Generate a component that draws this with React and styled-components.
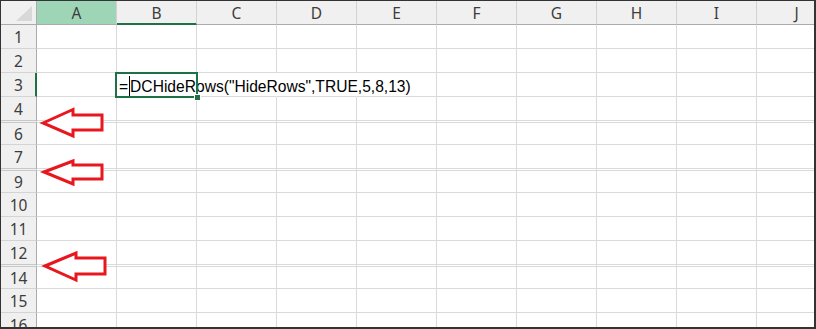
import React from 'react';
import styled, { createGlobalStyle } from 'styled-components';

const GREEN = '#1e7145';
const GRID = '#dadada';
const HEAD_LINE = '#ababab';

const GlobalStyle = createGlobalStyle`
  html, body {
    margin: 0;
    padding: 0;
    background: #fff;
  }
  body {
    overflow: hidden;
  }
`;

const COLS = ['A', 'B', 'C', 'D', 'E', 'F', 'G', 'H', 'I', 'J'];

// rows 5, 8 and 13 are hidden: the row above gets the double line
const ROWS = [
  { n: 1, h: 24 },
  { n: 2, h: 24 },
  { n: 3, h: 24, formula: true },
  { n: 4, h: 26, hiddenAfter: true },
  { n: 6, h: 22 },
  { n: 7, h: 26, hiddenAfter: true },
  { n: 9, h: 22 },
  { n: 10, h: 24 },
  { n: 11, h: 24 },
  { n: 12, h: 26, hiddenAfter: true },
  { n: 14, h: 22 },
  { n: 15, h: 24 },
  { n: 16, h: 24 },
];

const ARROWS = [
  { x: 40, y: 107, tip: 15, back: 32, top: 1.5, bottom: 28, shaftTop: 7, shaftBottom: 22, right: 61 },
  { x: 41, y: 158, tip: 13, back: 31, top: 2, bottom: 25, shaftTop: 6, shaftBottom: 20, right: 60 },
  { x: 42, y: 250, tip: 15, back: 33, top: 2, bottom: 29, shaftTop: 7, shaftBottom: 23, right: 62 },
];

const Frame = styled.div`
  position: relative;
  width: 816px;
  height: 329px;
  box-sizing: border-box;
  border: 1px solid #333;
  border-right-width: 2px;
  border-bottom-width: 2px;
  overflow: hidden;
  background: #fff;
  font-family: 'Noto Sans', 'Liberation Sans', sans-serif;
`;

const Row = styled.div`
  display: flex;
  height: ${(p) => p.$h}px;
`;

const Corner = styled.div`
  position: relative;
  flex: none;
  width: 36px;
  box-sizing: border-box;
  background: #f0f0f0;
  border-right: 1px solid ${HEAD_LINE};
  border-bottom: 1px solid ${HEAD_LINE};

  &::after {
    content: '';
    position: absolute;
    left: 15px;
    top: 5px;
    width: 16px;
    height: 15px;
    background: #d8d8d8;
    clip-path: polygon(0 100%, 100% 100%, 100% 0);
  }
`;

const ColHeader = styled.div`
  flex: none;
  width: 80px;
  box-sizing: border-box;
  display: flex;
  align-items: center;
  justify-content: center;
  background: ${(p) => (p.$selected ? '#9fd5b7' : '#f0f0f0')};
  border-right: 1px solid #d2d2d2;
  border-bottom: ${(p) => (p.$active ? `2px solid ${GREEN}` : `1px solid ${HEAD_LINE}`)};
  color: #3c3c3c;
  font-size: 15.5px;
  padding-top: ${(p) => (p.$active ? '1px' : '0')};
`;

const RowHeader = styled.div`
  flex: none;
  width: 36px;
  box-sizing: border-box;
  display: flex;
  align-items: center;
  justify-content: center;
  background: #f0f0f0;
  border-right: ${(p) => (p.$active ? `2px solid ${GREEN}` : `1px solid ${HEAD_LINE}`)};
  border-bottom: ${(p) => (p.$double ? '3px double #c8c8c8' : '1px solid #d4d4d4')};
  color: #3c3c3c;
  font-size: 15.5px;
  padding-left: ${(p) => (p.$active ? '1px' : '0')};
`;

const Cell = styled.div`
  position: relative;
  flex: none;
  width: 80px;
  box-sizing: border-box;
  border-right: 1px solid ${(p) => (p.$spill ? 'transparent' : GRID)};
  border-bottom: ${(p) => (p.$double ? `3px double ${GRID}` : `1px solid ${GRID}`)};
`;

const ActiveCell = styled(Cell)`
  z-index: 2;
  display: flex;
  align-items: center;
  padding: 4px 0 0 2px;
  white-space: nowrap;
  font-family: 'Liberation Sans', Arial, sans-serif;
  font-size: 15.6px;
  color: #000;

  &::after {
    content: '';
    position: absolute;
    left: -2px;
    top: -1px;
    right: -2px;
    bottom: -2px;
    border: 2px solid ${GREEN};
    pointer-events: none;
  }

  &::before {
    content: '';
    position: absolute;
    right: -5px;
    bottom: -5px;
    width: 5px;
    height: 5px;
    background: ${GREEN};
    border: 1px solid #fff;
    z-index: 3;
  }
`;

const Caret = styled.span`
  flex: none;
  width: 1px;
  height: 20px;
  margin: 0 0 0 1px;
  background: #000;
  align-self: flex-end;
`;

const ArrowSvg = styled.svg`
  position: absolute;
  left: ${(p) => p.$x}px;
  top: ${(p) => p.$y}px;
  overflow: visible;
  z-index: 4;
`;

function Arrow({ a }) {
  const points = [
    [2, a.tip],
    [a.back, a.top],
    [a.back, a.shaftTop],
    [a.right, a.shaftTop],
    [a.right, a.shaftBottom],
    [a.back, a.shaftBottom],
    [a.back, a.bottom],
  ]
    .map((pt) => pt.join(','))
    .join(' ');
  return (
    <ArrowSvg $x={a.x} $y={a.y} width={a.right + 2} height={a.bottom + 2}>
      <polygon points={points} fill="#fff" stroke="#e8161d" strokeWidth="3" strokeLinejoin="miter" />
    </ArrowSvg>
  );
}

function SheetRow({ row }) {
  return (
    <Row $h={row.h}>
      <RowHeader $active={row.formula} $double={row.hiddenAfter}>
        {row.n}
      </RowHeader>
      {COLS.map((c) => {
        if (row.formula && c === 'B') {
          return (
            <ActiveCell key={c} $double={row.hiddenAfter}>
              <span>=</span>
              <Caret />
              <span>DCHideRows("HideRows",TRUE,5,8,13)</span>
            </ActiveCell>
          );
        }
        const spill = row.formula && (c === 'C' || c === 'D');
        return <Cell key={c} $spill={spill} $double={row.hiddenAfter} />;
      })}
    </Row>
  );
}

export default function App() {
  return (
    <>
      <GlobalStyle />
      <Frame>
        <Row $h={24}>
          <Corner />
          {COLS.map((c) => (
            <ColHeader key={c} $selected={c === 'A'} $active={c === 'B'}>
              {c}
            </ColHeader>
          ))}
        </Row>
        {ROWS.map((r) => (
          <SheetRow key={r.n} row={r} />
        ))}
        {ARROWS.map((a, i) => (
          <Arrow key={i} a={a} />
        ))}
      </Frame>
    </>
  );
}
